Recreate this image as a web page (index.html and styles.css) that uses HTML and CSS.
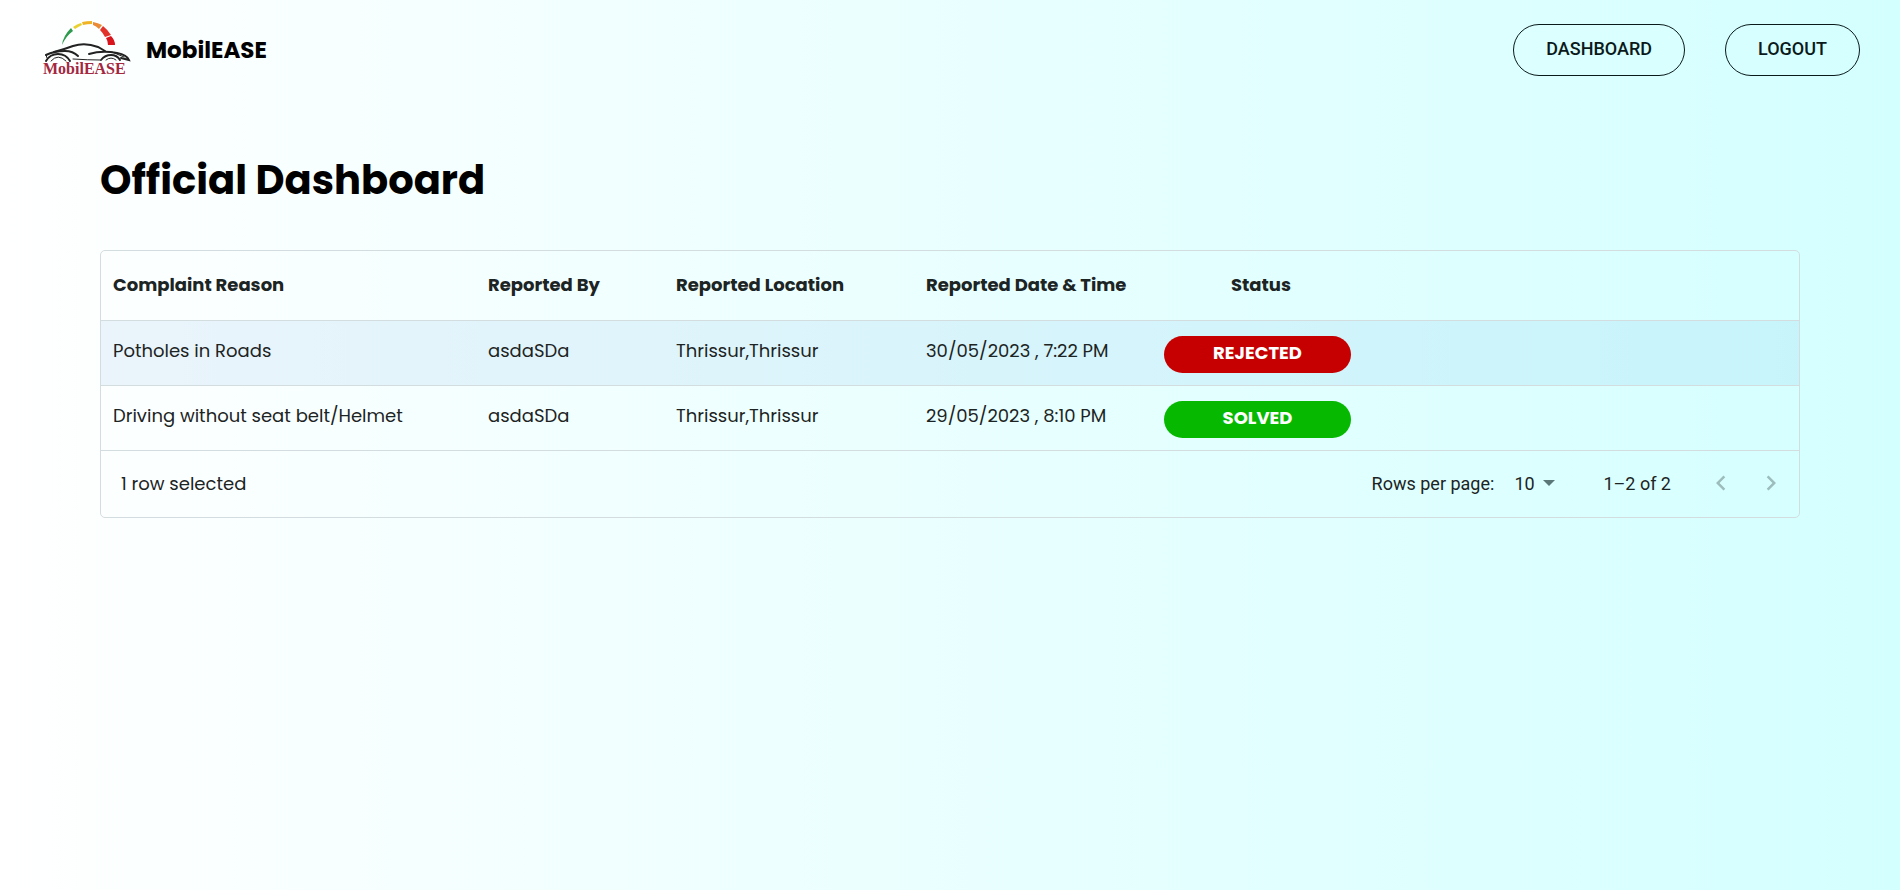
FILE: index.html
```html
<!DOCTYPE html>
<html lang="en">
<head>
    <meta charset="UTF-8">
    <title>MobilEASE</title>
    <link rel="stylesheet" href="styles.css">
</head>
<body>
    <header class="navbar">
        <a class="brand" href="#">
            <svg class="logo" width="92" height="60" viewBox="0 0 92 60" role="img" aria-label="MobilEASE logo">
                <!-- gauge -->
                <path d="M22 25 Q23 16 31 8 L33 11 Q26 16 22 25 Z" fill="#2e9a4e"/>
                <path d="M33 7 Q37 4 41 3 L42 5 Q38 7 35 9 Z" fill="#e8d12e"/>
                <path d="M42 2 Q47 1 52 1 L52 4 Q47 4 43 5 Z" fill="#f0b323"/>
                <path d="M53 2 Q58 3 62 5 L59 9 Q56 6 53 5 Z" fill="#ea8a35"/>
                <path d="M63 6 Q68 10 71 15 L65 17 Q63 13 60 10 Z" fill="#e2332a"/>
                <path d="M71 16 Q75 20 75 25 L68 25 Q68 21 66 18 Z" fill="#d8141c"/>
                <!-- car -->
                <g fill="none" stroke="#222" stroke-linecap="round">
                    <path d="M14 32 Q25 29 33 26 Q45 22 58 27 L65 31" stroke-width="2"/>
                    <path d="M6 35 Q14 31 25 31 Q33 31 38 36" stroke-width="2"/>
                    <path d="M49 34 Q62 30 77 33 Q87 35 89 40 L81 38" stroke-width="2"/>
                    <path d="M6 35 L7 38 M33 39 Q48 40 60 40 M72 32 L84 37" stroke-width="1"/>
                    <path d="M6 41 Q10 34 18 34 Q26 34 30 41 M61 40 Q65 35 71 35 Q77 35 80 40" stroke-width="2"/>
                    <path d="M11 41 Q18 33 26 41 M66 40 Q71 36 76 40" stroke-width="1"/>
                </g>
                <text class="logo-text" x="3" y="54">MobilEASE</text>
            </svg>
            <span class="brand-name">MobilEASE</span>
        </a>
        <nav class="nav-actions">
            <button class="nav-button" type="button">Dashboard</button>
            <button class="nav-button" type="button">Logout</button>
        </nav>
    </header>

    <main class="content">
        <h1>Official Dashboard</h1>
        <div class="grid">
            <table class="complaints">
                <colgroup>
                    <col class="col-reason">
                    <col class="col-by">
                    <col class="col-location">
                    <col class="col-date">
                    <col class="col-status">
                    <col>
                </colgroup>
                <thead>
                    <tr>
                        <th>Complaint Reason</th>
                        <th>Reported By</th>
                        <th>Reported Location</th>
                        <th>Reported Date &amp; Time</th>
                        <th class="center">Status</th>
                        <td></td>
                    </tr>
                </thead>
                <tbody>
                    <tr class="selected">
                        <td>Potholes in Roads</td>
                        <td>asdaSDa</td>
                        <td>Thrissur,Thrissur</td>
                        <td>30/05/2023 , 7:22 PM</td>
                        <td class="status-cell"><span class="status rejected">REJECTED</span></td>
                        <td></td>
                    </tr>
                    <tr>
                        <td>Driving without seat belt/Helmet</td>
                        <td>asdaSDa</td>
                        <td>Thrissur,Thrissur</td>
                        <td>29/05/2023 , 8:10 PM</td>
                        <td class="status-cell"><span class="status solved">SOLVED</span></td>
                        <td></td>
                    </tr>
                </tbody>
            </table>
            <div class="grid-footer">
                <span class="selected-count">1 row selected</span>
                <div class="pagination">
                    <label for="rowsPerPage">Rows per page:</label>
                    <div class="select-wrap">
                        <select id="rowsPerPage">
                            <option>10</option>
                        </select>
                        <svg class="caret" width="12" height="6" viewBox="0 0 12 6"><path d="M0 0H12L6 6Z" fill="currentColor"/></svg>
                    </div>
                    <span class="range">1–2 of 2</span>
                    <button class="page-button" type="button" aria-label="Previous page" disabled>
                        <svg width="30" height="30" viewBox="0 0 24 24"><path d="M15.41 7.41 14 6l-6 6 6 6 1.41-1.41L10.83 12z" fill="currentColor"/></svg>
                    </button>
                    <button class="page-button" type="button" aria-label="Next page" disabled>
                        <svg width="30" height="30" viewBox="0 0 24 24"><path d="M10 6 8.59 7.41 13.17 12l-4.58 4.59L10 18l6-6z" fill="currentColor"/></svg>
                    </button>
                </div>
            </div>
        </div>
    </main>
</body>
</html>
```

FILE: styles.css
```css
* {
    box-sizing: border-box;
}
body {
    margin: 0;
    min-height: 100vh;
    background: linear-gradient(90deg, #ffffff, #d4ffff);
    color: #1c2424;
    font-family: Poppins, Inter, sans-serif;
    font-size: 18px;
}
.navbar {
    display: flex;
    justify-content: space-between;
    align-items: center;
    height: 100px;
    padding: 0 40px;
}
.brand {
    display: flex;
    align-items: center;
    gap: 14px;
    color: #000;
    text-decoration: none;
}
.logo-text {
    font-family: "Liberation Serif", serif;
    font-size: 16px;
    font-weight: bold;
    fill: #a3283f;
}
.brand-name {
    font-size: 23px;
    font-weight: 700;
}
.nav-actions {
    display: flex;
    gap: 40px;
}
.nav-button {
    height: 52px;
    padding: 0 32px 4px;
    border: 1px solid #0a1a1a;
    border-radius: 26px;
    background: transparent;
    color: #0a1a1a;
    font-family: Roboto, sans-serif;
    font-size: 18px;
    font-weight: 500;
    text-transform: uppercase;
}
.content {
    padding: 50px 100px;
}
h1 {
    margin: 0 0 40px;
    color: #000;
    font-size: 40px;
    line-height: 60px;
    font-weight: 700;
}
.grid {
    border: 1px solid #d3dddf;
    border-radius: 5px;
}
.complaints {
    width: 100%;
    table-layout: fixed;
    border-collapse: separate;
    border-spacing: 0;
}
.col-reason {
    width: 375px;
}
.col-by {
    width: 188px;
}
.col-location {
    width: 250px;
}
.col-date {
    width: 238px;
}
.col-status {
    width: 218px;
}
.complaints th,
.complaints td {
    height: 65px;
    padding: 0 12px 6px;
    border-bottom: 1px solid #d3dddf;
    text-align: left;
    white-space: nowrap;
}
.complaints thead th {
    height: 70px;
    padding-bottom: 2px;
    font-weight: 700;
}
.complaints .center {
    text-align: center;
}
.complaints .status-cell {
    padding: 2px 12px 0;
}
.selected {
    background: rgba(25, 118, 210, 0.08);
}
.status {
    display: block;
    width: 187px;
    height: 37px;
    border-radius: 19px;
    color: #fff;
    font-weight: 700;
    line-height: 34px;
    text-align: center;
}
.rejected {
    background: #c60000;
}
.solved {
    background: #06b900;
}
.grid-footer {
    display: flex;
    justify-content: space-between;
    align-items: center;
    height: 66px;
    padding: 0 8px 2px 20px;
}
.pagination {
    display: flex;
    align-items: center;
    font-family: Roboto, sans-serif;
}
.select-wrap {
    display: flex;
    align-items: center;
    margin: 0 48px 0 20px;
}
.select-wrap select {
    width: 29px;
    padding: 0;
    border: 0;
    background: transparent;
    color: inherit;
    font: inherit;
    appearance: none;
}
.caret {
    color: #5b7778;
}
.range {
    margin-right: 30px;
}
.page-button {
    display: flex;
    padding: 5px;
    border: 0;
    background: transparent;
    color: #9dbcbc;
}
.page-button + .page-button {
    margin-left: 10px;
}
```
